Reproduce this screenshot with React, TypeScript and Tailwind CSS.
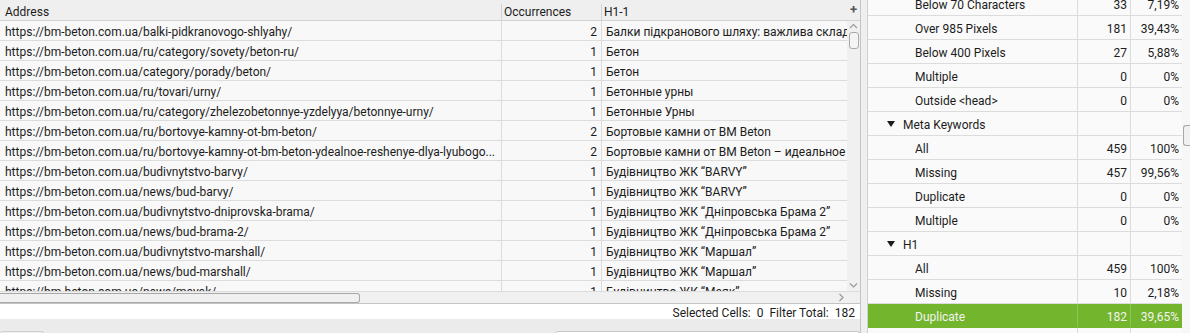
import React from "react";

const rows: [string, string, string][] = [
  ["https://bm-beton.com.ua/balki-pidkranovogo-shlyahy/", "2", "Балки підкранового шляху: важлива складова"],
  ["https://bm-beton.com.ua/ru/category/sovety/beton-ru/", "1", "Бетон"],
  ["https://bm-beton.com.ua/category/porady/beton/", "1", "Бетон"],
  ["https://bm-beton.com.ua/ru/tovari/urny/", "1", "Бетонные урны"],
  ["https://bm-beton.com.ua/ru/category/zhelezobetonnye-yzdelyya/betonnye-urny/", "1", "Бетонные Урны"],
  ["https://bm-beton.com.ua/ru/bortovye-kamny-ot-bm-beton/", "2", "Бортовые камни от BM Beton"],
  ["https://bm-beton.com.ua/ru/bortovye-kamny-ot-bm-beton-ydealnoe-reshenye-dlya-lyubogo...", "2", "Бортовые камни от BM Beton – идеальное решение"],
  ["https://bm-beton.com.ua/budivnytstvo-barvy/", "1", "Будівництво ЖК “BARVY”"],
  ["https://bm-beton.com.ua/news/bud-barvy/", "1", "Будівництво ЖК “BARVY”"],
  ["https://bm-beton.com.ua/budivnytstvo-dniprovska-brama/", "1", "Будівництво ЖК “Дніпровська Брама 2”"],
  ["https://bm-beton.com.ua/news/bud-brama-2/", "1", "Будівництво ЖК “Дніпровська Брама 2”"],
  ["https://bm-beton.com.ua/budivnytstvo-marshall/", "1", "Будівництво ЖК “Маршал”"],
  ["https://bm-beton.com.ua/news/bud-marshall/", "1", "Будівництво ЖК “Маршал”"],
  ["https://bm-beton.com.ua/news/mayak/", "1", "Будівництво ЖК “Маяк”"],
];

type RItem = { label: string; count?: string; pct?: string; group?: boolean; active?: boolean };

const right: RItem[] = [
  { label: "Below 70 Characters", count: "33", pct: "7,19%" },
  { label: "Over 985 Pixels", count: "181", pct: "39,43%" },
  { label: "Below 400 Pixels", count: "27", pct: "5,88%" },
  { label: "Multiple", count: "0", pct: "0%" },
  { label: "Outside <head>", count: "0", pct: "0%" },
  { label: "Meta Keywords", group: true },
  { label: "All", count: "459", pct: "100%" },
  { label: "Missing", count: "457", pct: "99,56%" },
  { label: "Duplicate", count: "0", pct: "0%" },
  { label: "Multiple", count: "0", pct: "0%" },
  { label: "H1", group: true },
  { label: "All", count: "459", pct: "100%" },
  { label: "Missing", count: "10", pct: "2,18%" },
  { label: "Duplicate", count: "182", pct: "39,65%", active: true },
  { label: "", count: "", pct: "" },
];

const Chevron = ({ dir }: { dir: "up" | "down" | "right" }) => {
  const d =
    dir === "up" ? "M1 5 L4.5 1.5 L8 5" : dir === "down" ? "M1 1.5 L4.5 5 L8 1.5" : "M1.5 1 L5 4.5 L1.5 8";
  const w = dir === "right" ? 7 : 9;
  const h = dir === "right" ? 9 : 7;
  return (
    <svg width={w} height={h} viewBox={`0 0 ${w} ${h}`} className="block">
      <path d={d} fill="none" stroke="#9a9a9a" strokeWidth="1.2" />
    </svg>
  );
};

export default function App() {
  return (
    <div className="w-[1190px] h-[333px] flex overflow-hidden bg-[#ececec] text-[12px] leading-[14px] text-[#1c1c1c] font-['Roboto','Liberation_Sans',sans-serif]">
      {/* Left panel */}
      <div className="w-[861px] flex flex-col border-r border-[#c4c4c4]">
        <div className="h-[304px] flex flex-col border-b border-[#c4c4c4] bg-[#f0f0f0]">
          <div className="flex h-[291px]">
            {/* table */}
            <div className="w-[847px] flex flex-col overflow-hidden">
              <div className="h-[21px] flex shrink-0 bg-[#efefef] border-b border-[#d2d2d2] pt-[4px]">
                <div className="w-[502px] shrink-0 border-r border-[#d2d2d2] pl-[5px] flex items-center">Address</div>
                <div className="w-[100px] shrink-0 border-r border-[#d2d2d2] pl-[2px] flex items-center">Occurrences</div>
                <div className="flex-1 pl-[2px] flex items-center">H1-1</div>
              </div>
              <div className="flex flex-col bg-[#f8f8f8]">
                {rows.map((r, i) => (
                  <div key={i} className="h-[20px] flex shrink-0 border-b border-[#dcdcdc]">
                    <div className="w-[502px] shrink-0 border-r border-[#dcdcdc] pl-[5px] pt-[3px] flex items-center overflow-hidden whitespace-nowrap">
                      {r[0]}
                    </div>
                    <div className="w-[100px] shrink-0 border-r border-[#dcdcdc] pr-[4px] pt-[3px] flex items-center justify-end">
                      {r[1]}
                    </div>
                    <div className="flex-1 pl-[4px] pt-[3px] flex items-center overflow-hidden whitespace-nowrap">{r[2]}</div>
                  </div>
                ))}
              </div>
            </div>
            {/* vertical scrollbar */}
            <div className="w-[13px] flex flex-col bg-[#f0f0f0]">
              <div className="h-[21px] flex items-center justify-center border-b border-[#d2d2d2] bg-[#efefef] text-[13px] font-bold text-[#555]">
                +
              </div>
              <div className="flex-1 flex flex-col items-center pt-[2px]">
                <Chevron dir="up" />
                <div className="mt-[2px] ml-[1px] w-[10px] h-[17px] rounded-[3px] border border-[#a8a8a8] bg-[#f4f4f4]" />
                <div className="flex-1" />
                <div className="mb-[2px]">
                  <Chevron dir="down" />
                </div>
              </div>
            </div>
          </div>
          {/* horizontal scrollbar */}
          <div className="h-[12px] flex border-t border-[#dcdcdc]">
            <div className="w-[847px] flex items-center">
              <div className="w-[360px] h-[10px] mt-[1px] rounded-r-[3px] border border-l-0 border-[#a8a8a8] bg-[#f0f0f0]" />
              <div className="flex-1" />
              <div className="mr-[2px]">
                <Chevron dir="right" />
              </div>
            </div>
            <div className="w-[13px]" />
          </div>
        </div>
        {/* status bar */}
        <div className="h-[15px] bg-white flex items-center justify-end pr-[5px] pt-[3px] gap-[6px]">
          <span>Selected Cells:</span>
          <span>0</span>
          <span>Filter Total:</span>
          <span>182</span>
        </div>
        <div className="flex-1 flex bg-[#ebebeb] pt-[12px]">
          <div className="w-[44px] h-[6px] rounded-t-[3px] border border-b-0 border-[#d0d0d0] bg-[#f0f0f0]" />
          <div className="ml-[511px] flex-1 h-[6px] rounded-t-[3px] border border-b-0 border-[#c8c8c8] bg-white" />
        </div>
      </div>

      {/* splitter */}
      <div className="w-[6px] bg-[#efefef]" />

      {/* Right panel */}
      <div className="flex-1 flex border-l border-[#d0d0d0] bg-[#fafafa] overflow-hidden">
        <div className="w-[314px] flex flex-col -mt-[8px]">
          {right.map((it, i) => {
            const active = !!it.active;
            const b = active ? "border-[#8cc45a]" : "border-[#dcdcdc]";
            return (
              <div
                key={i}
                className={`h-[24px] flex shrink-0 border-b ${active ? "bg-[#73b52d] text-[#f3f3f3] border-[#73b52d]" : "border-[#dcdcdc]"}`}
              >
                <div className={`w-[210px] shrink-0 border-r ${b} pt-[3px] flex items-center ${it.group ? "pl-[19px]" : "pl-[47px]"}`}>
                  {it.group && (
                    <svg width="8" height="7" viewBox="0 0 8 7" className="mr-[8px] -mt-[2px]">
                      <path d="M0 0 H8 L4 6 Z" fill="#1c1c1c" />
                    </svg>
                  )}
                  {it.label}
                </div>
                <div className={`w-[53px] shrink-0 border-r ${b} pt-[3px] flex items-center justify-end pr-[3px]`}>{it.count}</div>
                <div className={`w-[52px] shrink-0 border-r ${b} pt-[3px] flex items-center justify-end pr-[3px]`}>{it.pct}</div>
              </div>
            );
          })}
        </div>
        <div className="flex-1 flex flex-col items-end pt-[125px] bg-[#f7f7f7]">
          <div className="w-[7px] h-[21px] rounded-l-[3px] border border-r-0 border-[#a8a8a8] bg-[#f0f0f0]" />
        </div>
      </div>
    </div>
  );
}
